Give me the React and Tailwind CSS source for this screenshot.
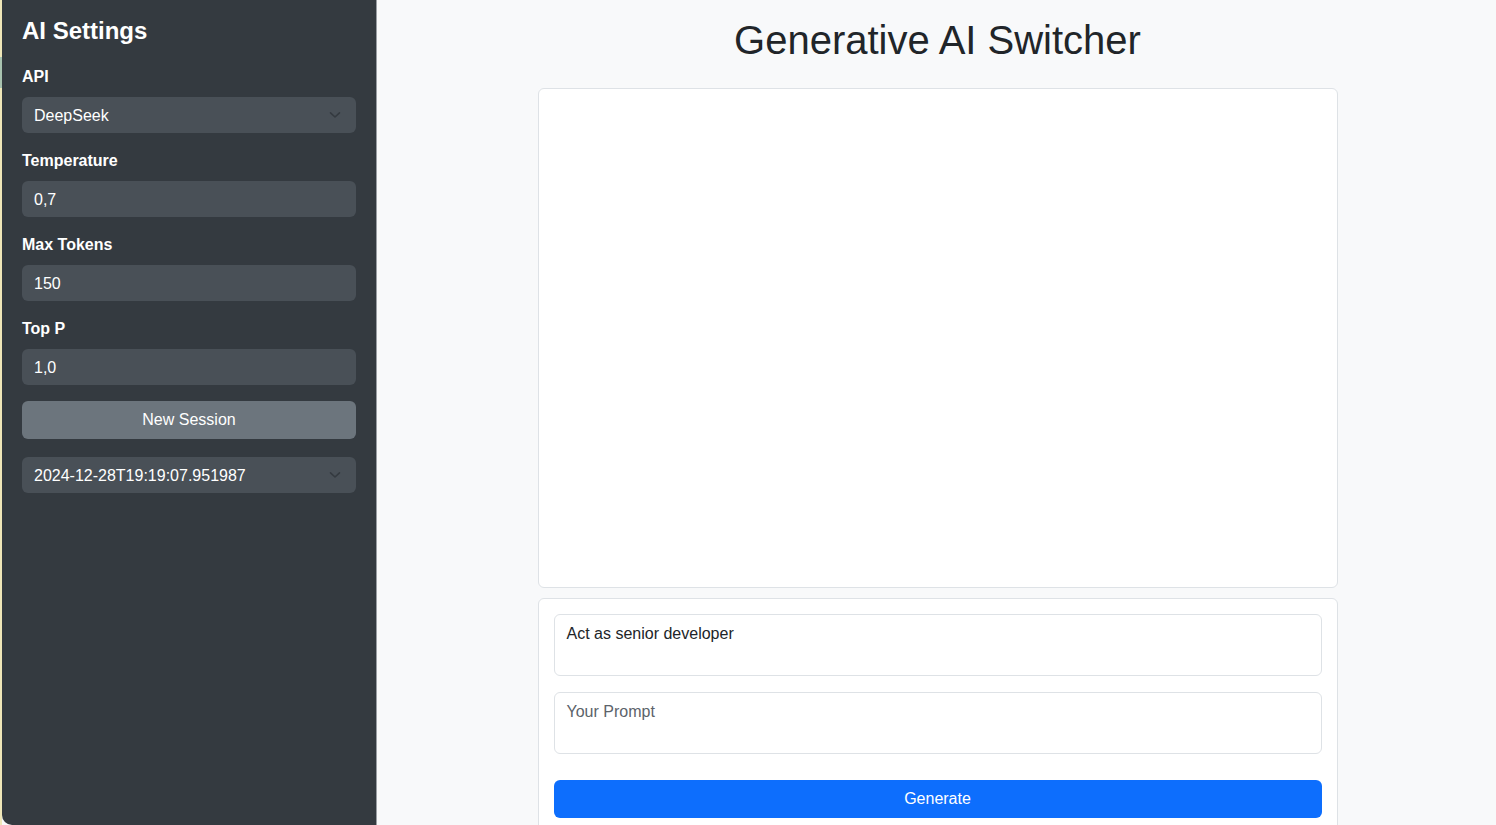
import React from "react";

function Chevron() {
  return (
    <svg width="12" height="8" viewBox="0 0 12 8" fill="none" className="absolute right-[15px] top-1/2 -translate-y-1/2">
      <path d="M1.5 1.8 L6 6 L10.5 1.8" stroke="#343a40" strokeWidth="1.6" strokeLinecap="round" strokeLinejoin="round" />
    </svg>
  );
}

function Field({ label, value, select }) {
  return (
    <div className="mb-4">
      <div className="text-[16px] leading-[24px] font-bold text-white mb-2">{label}</div>
      <div className="relative h-[36px] rounded-[6px] bg-[#495057] pl-[12px] pt-[2px] flex items-center text-[16px] text-white">
        {value}
        {select && <Chevron />}
      </div>
    </div>
  );
}

export default function App() {
  return (
    <div
      className="flex w-full h-[825px] overflow-hidden bg-[#f8f9fa]"
      style={{ fontFamily: '"Liberation Sans", Arial, Helvetica, sans-serif' }}
    >
      <div className="w-[2px] h-full flex flex-col shrink-0">
        <div className="h-[57px] bg-[#efe6b8]" />
        <div className="h-[31px] bg-[#a9c3b0]" />
        <div className="flex-1 bg-[#efe6b8]" />
      </div>
      <aside className="w-[374px] shrink-0 h-full bg-[#343a40] px-[20px] pt-[16px] rounded-bl-[10px]">
        <h2 className="text-[24px] leading-[29px] font-bold text-white mb-[20px]">AI Settings</h2>
        <Field label="API" value="DeepSeek" select />
        <Field label="Temperature" value="0,7" />
        <Field label="Max Tokens" value="150" />
        <Field label="Top P" value="1,0" />
        <button className="w-full h-[38px] rounded-[6px] bg-[#6c757d] text-white text-[16px] flex items-center justify-center">
          New Session
        </button>
        <div className="relative mt-[18px] h-[36px] rounded-[6px] bg-[#495057] pl-[12px] pt-[2px] flex items-center text-[16px] text-white">
          2024-12-28T19:19:07.951987
          <Chevron />
        </div>
      </aside>
      <div className="w-px shrink-0 h-full bg-[#9a9ea3]" />
      <main className="flex-1 flex flex-col items-center pt-[16px] pl-[2px]">
        <h1 className="text-[40px] leading-[48px] text-[#212529] mb-[24px]">Generative AI Switcher</h1>
        <div className="w-[800px] h-[500px] shrink-0 bg-white border border-[#dee2e6] rounded-[6px]" />
        <div className="w-[800px] mt-[10px] shrink-0 bg-white border border-[#dee2e6] rounded-[6px] p-[15px]">
          <div className="h-[62px] rounded-[6px] border border-[#dee2e6] px-[12px] pt-[7px] pb-[5px] text-[16px] leading-[24px] text-[#212529]">
            Act as senior developer
          </div>
          <div className="h-[62px] mt-[16px] rounded-[6px] border border-[#dee2e6] px-[12px] pt-[7px] pb-[5px] text-[16px] leading-[24px] text-[#5c636a]">
            Your Prompt
          </div>
          <button className="mt-[26px] w-full h-[38px] rounded-[6px] bg-[#0d6efd] text-white text-[16px] flex items-center justify-center">
            Generate
          </button>
        </div>
      </main>
    </div>
  );
}
